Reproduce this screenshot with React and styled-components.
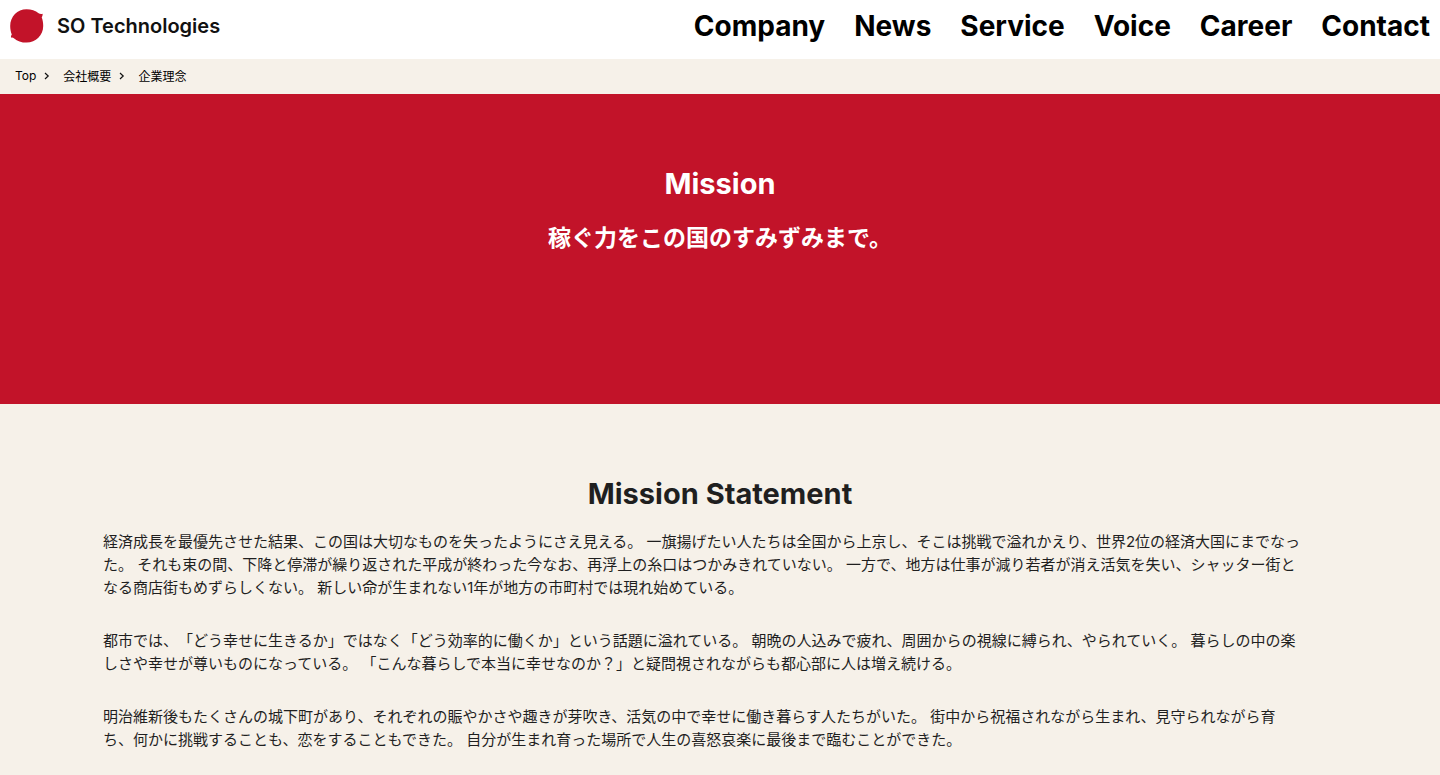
import styled, { createGlobalStyle } from "styled-components";

const GlobalStyle = createGlobalStyle`
    * {
        box-sizing: border-box;
    }

    body {
        margin: 0;
        background-color: #f6f1e9;
        color: #1f1f1f;
        font-family: Inter, "Noto Sans CJK JP", sans-serif;
        text-spacing-trim: space-all;
    }
`

const Header = styled.header`
    display: flex;
    justify-content: space-between;
    align-items: flex-start;
    height: 59px;
    padding: 8px 10px 0;
    background-color: #fff;
`

const Logo = styled.a`
    display: flex;
    align-items: center;
    gap: 13px;
    height: 36px;
    color: #111;
    font-size: 20px;
    font-weight: 600;
    text-decoration: none;
`

const Nav = styled.nav`
    display: flex;
    gap: 29px;
`

const NavLink = styled.a`
    color: #000;
    font-size: 28px;
    font-weight: 700;
    line-height: 36px;
    text-decoration: none;
`

const Breadcrumb = styled.ol`
    display: flex;
    align-items: center;
    height: 35px;
    margin: 0;
    padding: 0 15px 2px;
    color: #000;
    list-style: none;
    font-size: 12px;
`

const Crumb = styled.li`
    display: flex;
    align-items: center;

    a {
        color: #000;
        text-decoration: none;
    }

    svg {
        margin: 0 13px 0 7px;
    }
`

const Hero = styled.section`
    height: 310px;
    padding-top: 70px;
    background-color: #c21329;
    color: #fff;
    text-align: center;
`

const Title = styled.h1`
    margin: 0;
    font-size: 29px;
    line-height: 40px;
`

const Lead = styled.p`
    margin: 16px 0 0;
    font-size: 23px;
    font-weight: 700;
    line-height: 36px;
`

const Statement = styled.section`
    padding: 70px 137px 0 103px;
`

const StatementTitle = styled.h2`
    margin: 0 -34px 16px 0;
    font-size: 29px;
    line-height: 40px;
    text-align: center;
`

const Paragraph = styled.p`
    margin: 0 0 30px;
    font-size: 15px;
    line-height: 23px;

    &:last-child {
        margin-bottom: 0;
    }
`

const navItems = ["Company", "News", "Service", "Voice", "Career", "Contact"];

const crumbs = ["Top", "会社概要", "企業理念"];

const paragraphs = [
    "経済成長を最優先させた結果、この国は大切なものを失ったようにさえ見える。 一旗揚げたい人たちは全国から上京し、そこは挑戦で溢れかえり、世界2位の経済大国にまでなった。 それも束の間、下降と停滞が繰り返された平成が終わった今なお、再浮上の糸口はつかみきれていない。 一方で、地方は仕事が減り若者が消え活気を失い、シャッター街となる商店街もめずらしくない。 新しい命が生まれない1年が地方の市町村では現れ始めている。",
    "都市では、「どう幸せに生きるか」ではなく「どう効率的に働くか」という話題に溢れている。 朝晩の人込みで疲れ、周囲からの視線に縛られ、やられていく。 暮らしの中の楽しさや幸せが尊いものになっている。 「こんな暮らしで本当に幸せなのか？」と疑問視されながらも都心部に人は増え続ける。",
    "明治維新後もたくさんの城下町があり、それぞれの賑やかさや趣きが芽吹き、活気の中で幸せに働き暮らす人たちがいた。 街中から祝福されながら生まれ、見守られながら育ち、何かに挑戦することも、恋をすることもできた。 自分が生まれ育った場所で人生の喜怒哀楽に最後まで臨むことができた。",
];

const LogoMark = () => (
    <svg width="34" height="34" viewBox="0 0 34 34" aria-hidden="true">
        <path
            fill="#c21329"
            d="M16.5 0.3C21.3 0.3 25.6 1.8 28.6 4.2C29.8 5 31.2 5.1 32.6 4.7C32.8 6 32.4 7.2 31.7 8.2C32.7 10.8 33.2 13.8 33.2 17C33.2 26.3 25.8 33.6 16.6 33.6C11.4 33.6 7.2 32 4.2 29.4C3.2 28.6 2.2 28.4 1 28.7C0.8 27.4 1.1 26.4 1.8 25.4C0.7 22.8 0.2 20 0.2 17C0.2 7.6 7.4 0.3 16.5 0.3Z"
        />
    </svg>
)

const Chevron = () => (
    <svg width="7" height="8" viewBox="0 0 7 8" fill="none" stroke="#111" strokeWidth="1.2" aria-hidden="true">
        <path d="M2 1L5.2 4L2 7" />
    </svg>
)

const App = () => {
    return (
        <>
            <GlobalStyle />
            <Header>
                <Logo href="#">
                    <LogoMark />
                    <span>SO Technologies</span>
                </Logo>
                <Nav>
                    {navItems.map((item) => (
                        <NavLink key={item} href={`#${item.toLowerCase()}`}>{item}</NavLink>
                    ))}
                </Nav>
            </Header>
            <Breadcrumb>
                {crumbs.map((crumb, i) => (
                    <Crumb key={crumb}>
                        {i < crumbs.length - 1 ? <a href="#">{crumb}</a> : <span>{crumb}</span>}
                        {i < crumbs.length - 1 ? <Chevron /> : null}
                    </Crumb>
                ))}
            </Breadcrumb>
            <main>
                <Hero>
                    <Title>Mission</Title>
                    <Lead>稼ぐ力をこの国のすみずみまで。</Lead>
                </Hero>
                <Statement>
                    <StatementTitle>Mission Statement</StatementTitle>
                    {paragraphs.map((text) => (
                        <Paragraph key={text}>{text}</Paragraph>
                    ))}
                </Statement>
            </main>
        </>
    )
}

export default App
